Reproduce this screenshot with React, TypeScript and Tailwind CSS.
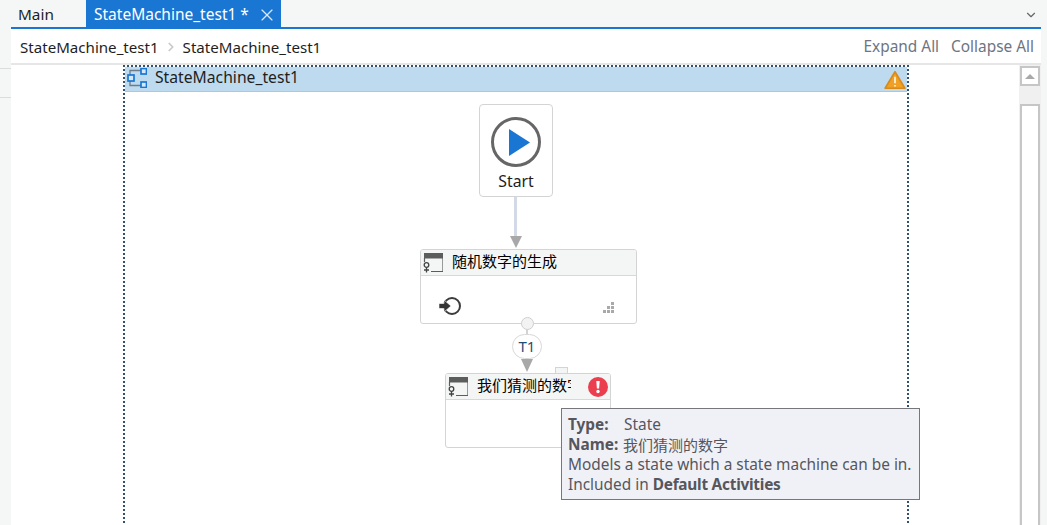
import React from 'react';
import { ChevronDown, ChevronRight, X } from 'lucide-react';

const uiFont = "font-['Noto_Sans','Noto_Sans_CJK_SC',sans-serif]";

function StateIcon({ className }: { className?: string }) {
  return (
    <svg viewBox="0 0 20 20" className={className}>
      <rect x="1" y="0" width="19.500" height="5.500" fill="#5c5c5c" />
      <path d="M1.500 5v4M20 5v13.500H8" fill="none" stroke="#5c5c5c" strokeWidth="1.200" />
      <circle cx="3.500" cy="12" r="2.300" fill="none" stroke="#444" strokeWidth="1.300" />
      <path d="M3.500 14v5.500M1 17h5" stroke="#444" strokeWidth="1.300" />
    </svg>
  );
}

function MachineIcon() {
  return (
    <svg viewBox="0 0 20 20" className="h-5 w-5">
      <path d="M3 7V2.500h11M3 13v4.500h11" fill="none" stroke="#6f7c88" strokeWidth="1.300" />
      <rect x="1" y="7" width="6" height="6" fill="#d5e8f7" stroke="#1976d2" strokeWidth="1.700" />
      <rect x="14" y="0.500" width="5.500" height="5.500" fill="#d5e8f7" stroke="#1976d2" strokeWidth="1.700" />
      <rect x="14" y="14" width="5.500" height="5.500" fill="#d5e8f7" stroke="#1976d2" strokeWidth="1.700" />
    </svg>
  );
}

function Tooltip() {
  return (
    <div className="absolute left-[561px] top-[408px] z-20 h-[92px] w-[359px] border border-[#77777b] bg-[#f0f1f7] px-[6px] py-[6px] text-[15.4px] leading-[20px] text-[#56565c]">
      <div className="flex">
        <span className="w-[56px] font-bold">Type:</span>
        <span>State</span>
      </div>
      <div className="flex">
        <span className="w-[55px] font-bold">Name:</span>
        <span className="text-[15px]">我们猜测的数字</span>
      </div>
      <div>Models a state which a state machine can be in.</div>
      <div>
        Included in <span className="font-bold tracking-[-0.25px]">Default Activities</span>
      </div>
    </div>
  );
}

function Canvas() {
  return (
    <div className="relative flex-1 bg-white">
      {/* scrollbar */}
      <div className="absolute bottom-0 left-[1008px] top-0 flex w-[22px] flex-col items-center bg-[#f0f0f0] pt-[1px]">
        <div className="flex h-[20px] w-[20px] items-center justify-center border-2 border-[#c6c6c6] bg-white">
          <div className="h-0 w-0 border-x-[5px] border-b-[5px] border-x-transparent border-b-[#a9a9a9]" />
        </div>
        <div className="mt-[18px] w-[20px] flex-1 border-2 border-b-0 border-[#c6c6c6] bg-white" />
      </div>
    </div>
  );
}

export default function App() {
  return (
    <div className={`relative flex h-[525px] w-[1047px] overflow-hidden bg-[#f5f6f6] ${uiFont} text-[15.1px] text-[#1e1e1e]`}>
      <div className="flex w-[11px] shrink-0 flex-col">
        <div className="mt-[68px] h-px bg-[#dcdcdc]" />
        <div className="mt-[28px] h-px bg-[#dcdcdc]" />
      </div>

      <div className="flex w-[1030px] shrink-0 flex-col">
        <div className="flex h-[27px] shrink-0 items-stretch pt-[2px]">
          <div className="flex w-[75px] items-center pl-[7px] text-[15.3px]">Main</div>
          <div className="-mt-[2px] flex w-[195px] items-center bg-[#1976d2] pl-[8px] pt-[2px] text-[15.5px] text-white">
            StateMachine_test1 *
            <X className="ml-[8px] h-[20px] w-[20px] text-[#dbe9f7]" strokeWidth={1.4} />
          </div>
          <div className="flex flex-1 items-center justify-end pr-[3px]">
            <ChevronDown className="h-[14px] w-[14px] text-[#666]" />
          </div>
        </div>
        <div className="h-[2px] shrink-0 bg-[#1976d2]" />
        <div className="flex h-[36px] shrink-0 items-center justify-between border-b-2 border-[#e6e6e6] bg-white pl-[9px] pr-[7px] pt-[2px]">
          <div className="flex items-center">
            <span>StateMachine_test1</span>
            <ChevronRight className="mx-[5px] h-[14px] w-[14px] text-[#c9c9c9]" strokeWidth={3} />
            <span>StateMachine_test1</span>
          </div>
          <div className="flex gap-[12px] text-[15.4px] text-[#6e7480]">
            <span>Expand All</span>
            <span>Collapse All</span>
          </div>
        </div>
        <Canvas />
      </div>

      {/* designer surface */}
      <div className="absolute left-[123px] top-[65px] h-[470px] w-[786px] border-2 border-dotted border-[#2f5272]">
        <div className="flex h-[25px] items-center border-b border-[#a9c9e2] bg-[#bedaef] pb-[2px] pl-[2px]">
          <MachineIcon />
          <span className="ml-[8px] text-[15.7px]">StateMachine_test1</span>
          <svg viewBox="0 0 20 18" className="absolute right-[1px] top-[3px] h-[20px] w-[22px]">
            <path d="M10 1.500 19 16.500H1Z" fill="#efa025" stroke="#d98a18" strokeWidth="1.500" strokeLinejoin="round" />
            <path d="M10 6v6M10 13.500v1.500" stroke="#fff" strokeWidth="1.400" />
          </svg>
        </div>
      </div>

      {/* start node */}
      <div className="absolute left-[479px] top-[104px] flex h-[93px] w-[74px] flex-col items-center rounded-[4px] border border-[#d4d4d4] bg-white">
        <svg viewBox="0 0 50 50" className="mt-[12px] h-[50px] w-[50px]">
          <circle cx="25" cy="25" r="23.500" fill="#fff" stroke="#666" strokeWidth="3" />
          <path d="M18 12v27l21-13.500Z" fill="#1976d2" />
        </svg>
        <span className="mt-[4px] text-[15.8px] leading-[20px]">Start</span>
      </div>

      {/* connector start to first state */}
      <div className="absolute left-[514px] top-[197px] h-[40px] w-[3px] bg-[#d3d9e6]" />
      <div className="absolute left-[510px] top-[236px] h-0 w-0 border-x-[6px] border-t-[12px] border-x-transparent border-t-[#a8a8a8]" />

      {/* first state */}
      <div className="absolute left-[420px] top-[249px] h-[75px] w-[217px] overflow-hidden rounded-[3px] border border-[#d4d4d4] bg-white">
        <div className="flex h-[26px] items-center border-b border-[#d8d8d8] bg-[#f4f6f6] pl-[2px]">
          <StateIcon className="h-[20px] w-[20px]" />
          <span className="ml-[9px] pb-[4px] text-[15px] leading-[20px] text-black">随机数字的生成</span>
        </div>
        <svg viewBox="0 0 24 20" className="absolute left-[17px] top-[46px] h-[20px] w-[24px]">
          <circle cx="14" cy="10" r="8" fill="none" stroke="#3c3c3c" strokeWidth="2" />
          <path d="M1 7.500h5V4l7 6-7 6v-3.500H1Z" fill="#333" stroke="#fff" strokeWidth=".6" />
        </svg>
        <svg viewBox="0 0 13 13" className="absolute left-[181px] top-[52px] h-[13px] w-[13px]" fill="#a9a9a9">
          <rect x="9" y="0" width="3" height="3" />
          <rect x="5" y="4" width="3" height="3" />
          <rect x="9" y="4" width="3" height="3" />
          <rect x="1" y="8" width="3" height="3" />
          <rect x="5" y="8" width="3" height="3" />
          <rect x="9" y="8" width="3" height="3" />
        </svg>
      </div>

      {/* transition T1 */}
      <div className="absolute left-[521px] top-[317px] h-[13px] w-[13px] rounded-full border border-[#cfcfcf] bg-[#f3f3f3]" />
      <div className="absolute left-[526px] top-[329px] h-[5px] w-[2px] bg-[#d3d3d3]" />
      <div className="absolute left-[512px] top-[334px] z-10 flex h-[25px] w-[30px] items-center justify-center rounded-full border border-[#d8d8d8] bg-white text-[15px] text-[#1f4e79]">
        T1
      </div>
      <div className="absolute left-[521px] top-[359px] h-0 w-0 border-x-[6px] border-t-[13px] border-x-transparent border-t-[#a8a8a8]" />
      <div className="absolute left-[555px] top-[367px] h-[7px] w-[13px] border border-[#d4d4d4] bg-[#f4f6f6]" />

      {/* second state */}
      <div className="absolute left-[445px] top-[373px] h-[75px] w-[166px] overflow-hidden rounded-[3px] border border-[#d4d4d4] bg-white">
        <div className="flex h-[26px] items-center border-b border-[#d8d8d8] bg-[#f4f6f6] pl-[2px]">
          <StateIcon className="h-[20px] w-[20px]" />
          <span className="ml-[9px] w-[94px] overflow-hidden whitespace-nowrap pb-[4px] text-[15px] leading-[20px] text-black">我们猜测的数字</span>
        </div>
        <svg viewBox="0 0 20 20" className="absolute left-[142px] top-[3px] h-[20px] w-[20px]">
          <circle cx="10" cy="10" r="10" fill="#eb3f50" />
          <path d="M8.300 4h3.400l-.6 7.500H8.900Z" fill="#fff" />
          <circle cx="10" cy="14.500" r="1.700" fill="#fff" />
        </svg>
      </div>

      <Tooltip />
    </div>
  );
}
